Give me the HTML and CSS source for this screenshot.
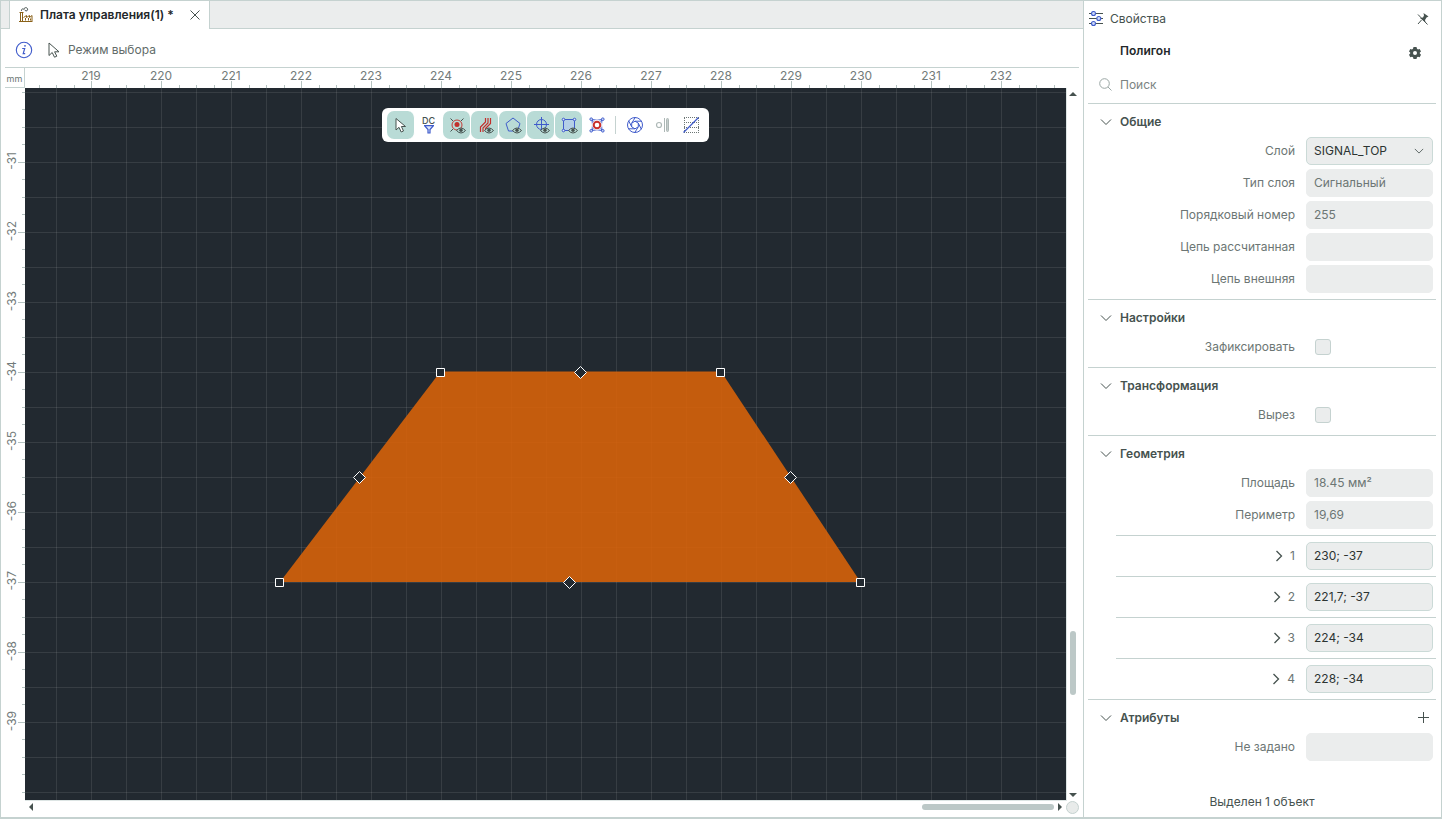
FILE: index.html
```html
<!DOCTYPE html>
<html lang="ru">
<head>
<meta charset="utf-8">
<title>Плата управления(1)</title>
<link rel="stylesheet" href="styles.css">
</head>
<body>
<svg class="defs" aria-hidden="true">
  <symbol id="chev-down" viewBox="0 0 12 12"><path d="M1 3.500 6 8.500 11 3.500" fill="none" stroke="currentColor" stroke-width="1"/></symbol>
  <symbol id="chev-right" viewBox="0 0 12 12"><path d="M3.500 1 8.500 6 3.500 11" fill="none" stroke="currentColor" stroke-width="1.300"/></symbol>
  <symbol id="eye" viewBox="0 0 10 7"><path d="M.5 3.500Q5-1.500 9.500 3.500 5 8.500.5 3.500Z" fill="#b9dbd6" stroke="#46524f"/><circle cx="5" cy="3.300" r="1.700" fill="#46524f"/></symbol>
</svg>
<div class="app">
  <main class="editor">
    <header class="tabs">
      <div class="tab">
        <svg class="tab-icon" width="16" height="16" viewBox="0 0 16 16" fill="none">
          <path d="M2.500 6V14M4.500 6V14M1.500 5.500H5.500M1 14.500H14.500" stroke="#8a6118"/>
          <path d="M5.500 10.500 8.500 8.500V10.500L11.500 8.500V10.500L14 8.500V14" stroke="#8a6118"/>
          <path d="M7.500 11V13.500M10.500 11V13.500M12.500 11.500V13.500" stroke="#8a6118"/>
          <path d="M3.500 4C3 1.500 5.500 1.500 6 2.500 6-.5 10.500.5 9.500 3 9 4.500 7 4 7 3" stroke="#46524f"/>
        </svg>
        <span class="tab-title">Плата управления(1) *</span>
        <button class="icon-btn" aria-label="Закрыть"><svg width="10" height="10" viewBox="0 0 10 10"><path d="M.5.5 9.500 9.500M9.500.5.5 9.500" stroke="#46524f"/></svg></button>
      </div>
    </header>
    <div class="modebar">
      <button class="icon-btn" aria-label="Информация"><svg width="18" height="18" viewBox="0 0 18 18" fill="none" stroke="#3f5bcb"><circle cx="9" cy="9" r="7.700" stroke-width="1.100"/><path d="M7.200 7.500H9.700L8.200 12.700H10.200" stroke-width="1.200"/><circle cx="10" cy="4.900" r=".5"/></svg></button>
      <svg class="mode-icon" width="12" height="16" viewBox="0 0 12 16"><path d="M1 1V13.500L4.200 10.500 6.500 15.200 8.800 14.200 6.600 9.800H11Z" fill="#fff" stroke="#46524f"/></svg>
      <span>Режим выбора</span>
    </div>
    <div class="work">
      <div class="unit">mm</div>
      <ol class="ruler-x"><li>219</li><li>220</li><li>221</li><li>222</li><li>223</li><li>224</li><li>225</li><li>226</li><li>227</li><li>228</li><li>229</li><li>230</li><li>231</li><li>232</li></ol>
      <div class="ruler-end"></div>
      <ol class="ruler-y"><li><span>-31</span></li><li><span>-32</span></li><li><span>-33</span></li><li><span>-34</span></li><li><span>-35</span></li><li><span>-36</span></li><li><span>-37</span></li><li><span>-38</span></li><li><span>-39</span></li></ol>
      <div class="canvas">
        <svg class="drawing" aria-label="Полигон">
          <path class="poly" d="M415.500 283.500H696L835.500 494H255Z"/>
          <path class="handle" d="M411.500 280.500h8v8h-8zM691.500 280.500h8v8h-8zM250.500 490.500h8v8h-8zM831.500 490.500h8v8h-8z"/>
          <path class="handle" d="M555.500 278.500l6 6-6 6-6-6zM334.500 383.500l6 6-6 6-6-6zM765.500 383.500l6 6-6 6-6-6zM544.500 488.500l6 6-6 6-6-6z"/>
        </svg>
        <div class="toolbar" role="toolbar">
          <button class="tool on" aria-label="Выбор"><svg viewBox="0 0 18 18"><path d="M4 2.500V14L7 11.300 9.200 16 11.500 15 9.400 10.500H13.500Z" fill="#fff" stroke="#46524f"/></svg></button>
          <button class="tool dc" aria-label="Фильтр DC"><span>DC</span><svg viewBox="0 0 10 9"><path d="M.6.7H9.400L6 4.500V8H4V4.500Z" fill="#dbe6fb" stroke="#3f5bcb" stroke-width="1.200"/></svg></button>
          <button class="tool on" aria-label="Площадки"><svg viewBox="0 0 18 18"><path d="M2.500 2.500 5 5M15.500 2.500 13 5M2.500 15.500 5 13" stroke="#46524f" fill="none"/><circle cx="9" cy="9" r="5" fill="none" stroke="#c63a35"/><circle cx="9" cy="8.500" r="2.500" fill="#c22f2b"/><use href="#eye" x="8" y="11" width="10" height="7"/></svg></button>
          <button class="tool on" aria-label="Проводники"><svg viewBox="0 0 18 18"><path d="M4.500 16V11L9.500 6V2M7 16V12L12 7V2M9.500 14V12.500L14.500 7.500V2" stroke="#c22f2b" stroke-width="1.200" fill="none"/><use href="#eye" x="8" y="11" width="10" height="7"/></svg></button>
          <button class="tool on" aria-label="Полигоны"><svg viewBox="0 0 18 18"><path d="M9 2 16 7.500 13.500 15H4.500L2 7.500Z" stroke="#3f5bcb" fill="none"/><use href="#eye" x="8" y="11" width="10" height="7"/></svg></button>
          <button class="tool on" aria-label="Отверстия"><svg viewBox="0 0 18 18"><path d="M9.500 1V16M2 8.500H17" stroke="#3f5bcb"/><circle cx="9.500" cy="8.500" r="5" stroke="#3f5bcb" fill="none"/><use href="#eye" x="8" y="11" width="10" height="7"/></svg></button>
          <button class="tool on" aria-label="Контуры"><svg viewBox="0 0 18 18"><path d="M3.500 3.500H14.500V14.500H3.500Z" stroke="#3f5bcb" fill="#b4cfe6"/><g fill="#dbe6fb" stroke="#3f5bcb"><circle cx="3.500" cy="3.500" r="1.300"/><circle cx="14.500" cy="3.500" r="1.300"/><circle cx="3.500" cy="14.500" r="1.300"/></g><use href="#eye" x="8" y="11" width="10" height="7"/></svg></button>
          <button class="tool" aria-label="Привязка"><svg viewBox="0 0 18 18"><path d="M3 3 15 15M15 3 3 15M4 3.500Q9 5 14 3.500Q13 9 14 14.500Q9 13 4 14.500Q5 9 4 3.500Z" fill="none" stroke="#3f5bcb"/><g fill="#dbe6fb" stroke="#3f5bcb"><circle cx="3.200" cy="3.200" r="1.300"/><circle cx="14.800" cy="3.200" r="1.300"/><circle cx="3.200" cy="14.800" r="1.300"/><circle cx="14.800" cy="14.800" r="1.300"/></g><circle cx="9" cy="9" r="5" fill="#fff"/><circle cx="9" cy="9" r="3.300" fill="#fff" stroke="#c9302c" stroke-width="2"/></svg></button>
          <span class="tool-sep"></span>
          <button class="tool" aria-label="Диафрагма"><svg viewBox="0 0 18 18" fill="none" stroke="#3f5bcb"><circle cx="9" cy="9" r="7.500"/><path d="M9 5.200 12.300 7.100V10.900L9 12.800 5.700 10.900V7.100ZM9 5.200 15.500 5.200M12.300 7.100 15.300 13.200M12.300 10.900 8.700 16.600M9 12.800 2.500 12.800M5.700 10.900 2.700 4.800M5.700 7.100 9.300 1.400"/></svg></button>
          <button class="tool" aria-label="Зазор"><svg viewBox="0 0 18 18" fill="#c6cecd" stroke="#adb8b6"><circle cx="5" cy="9" r="2.500" fill="#fff" stroke-width="1.200"/><path d="M10.500 2V16"/><rect x="12.500" y="2.500" width="2" height="13" rx="1"/></svg></button>
          <button class="tool" aria-label="Сетка"><svg viewBox="0 0 18 18" fill="none"><path d="M2 1.500H17M2 6.500H17M2 11.500H17M2 16.500H17M2.500 2V17M16.500 2V17" stroke="#6c7674" stroke-dasharray="1 1"/><path d="M1.500 16.500 16.500 1.500" stroke="#3f5bcb" stroke-width="1.200"/></svg></button>
        </div>
      </div>
      <div class="scroll-y">
        <i class="arrow up"></i>
        <i class="thumb-y"></i>
        <i class="arrow down"></i>
      </div>
      <div class="scroll-x">
        <i class="arrow left"></i>
        <i class="thumb-x"></i>
        <i class="arrow right"></i>
        <i class="corner"></i>
      </div>
    </div>
  </main>

  <aside class="panel">
    <header class="panel-head">
      <svg width="14" height="16" viewBox="0 0 14 16" stroke="#46524f"><path d="M0 2.500H14M0 7.500H14M0 12.500H14"/><g fill="#cdd9f8" stroke="#3f5bcb" stroke-width="1.100"><circle cx="4.500" cy="2.500" r="2"/><circle cx="9.800" cy="7.500" r="2"/><circle cx="4.500" cy="12.500" r="2"/></g></svg>
      <h2>Свойства</h2>
      <button class="icon-btn" aria-label="Открепить"><svg width="12" height="12" viewBox="0 0 12 12"><path d="M6.500 0 11.500 3.500 9.500 4.500 8 7 8.500 9.500 3 5 6 4.500 7 2.500Z" fill="#46524f"/><path d="M4.500 7 1 11M1 1.500 10.500 11.500" stroke="#46524f"/></svg></button>
    </header>
    <div class="panel-title">
      <h1>Полигон</h1>
      <button class="icon-btn" aria-label="Настройки"><svg width="12" height="14" viewBox="0 0 12 14"><path d="M4.500 1H7.500L8 2.800 9 3.400 10.700 2.900 12 5.400 10.800 6.600V7.600L12 8.700 10.700 11.200 9 10.700 8 11.300 7.500 13H4.500L4 11.300 3 10.700 1.300 11.200 0 8.700 1.200 7.600V6.600L0 5.400 1.300 2.900 3 3.400 4 2.800Z" fill="#46524f"/><circle cx="6" cy="7" r="2" fill="#fff"/></svg></button>
    </div>
    <div class="search">
      <svg width="13" height="13" viewBox="0 0 13 13" fill="none" stroke="#9aa6a4"><circle cx="5.500" cy="5.500" r="4.800"/><path d="M9 9 12.500 12.500"/></svg>
      <input type="text" placeholder="Поиск" aria-label="Поиск">
    </div>

    <section class="group">
      <h3><button class="group-head"><svg><use href="#chev-down"/></svg>Общие</button></h3>
      <div class="row"><label for="layer">Слой</label><span class="select-wrap"><select id="layer" class="field live"><option>SIGNAL_TOP</option></select><svg><use href="#chev-down"/></svg></span></div>
      <div class="row"><label for="ltype">Тип слоя</label><input id="ltype" class="field" type="text" value="Сигнальный" readonly></div>
      <div class="row"><label for="order">Порядковый номер</label><input id="order" class="field" type="text" value="255" readonly></div>
      <div class="row"><label for="net1">Цепь рассчитанная</label><input id="net1" class="field" type="text" readonly></div>
      <div class="row"><label for="net2">Цепь внешняя</label><input id="net2" class="field" type="text" readonly></div>
    </section>
    <section class="group">
      <h3><button class="group-head"><svg><use href="#chev-down"/></svg>Настройки</button></h3>
      <div class="row"><label for="lock">Зафиксировать</label><span class="check-cell"><input id="lock" class="check" type="checkbox"></span></div>
    </section>
    <section class="group">
      <h3><button class="group-head"><svg><use href="#chev-down"/></svg>Трансформация</button></h3>
      <div class="row"><label for="cut">Вырез</label><span class="check-cell"><input id="cut" class="check" type="checkbox"></span></div>
    </section>
    <section class="group flush">
      <h3><button class="group-head"><svg><use href="#chev-down"/></svg>Геометрия</button></h3>
      <div class="row"><label for="area">Площадь</label><input id="area" class="field" type="text" value="18.45 мм²" readonly></div>
      <div class="row"><label for="perim">Периметр</label><input id="perim" class="field" type="text" value="19,69" readonly></div>
      <div class="points">
        <div class="row point"><button class="icon-btn" aria-label="Раскрыть 1"><svg><use href="#chev-right"/></svg></button><label for="p1">1</label><input id="p1" class="field live" type="text" value="230; -37"></div>
        <div class="row point"><button class="icon-btn" aria-label="Раскрыть 2"><svg><use href="#chev-right"/></svg></button><label for="p2">2</label><input id="p2" class="field live" type="text" value="221,7; -37"></div>
        <div class="row point"><button class="icon-btn" aria-label="Раскрыть 3"><svg><use href="#chev-right"/></svg></button><label for="p3">3</label><input id="p3" class="field live" type="text" value="224; -34"></div>
        <div class="row point"><button class="icon-btn" aria-label="Раскрыть 4"><svg><use href="#chev-right"/></svg></button><label for="p4">4</label><input id="p4" class="field live" type="text" value="228; -34"></div>
      </div>
    </section>
    <section class="group">
      <div class="head-line">
        <h3><button class="group-head"><svg><use href="#chev-down"/></svg>Атрибуты</button></h3>
        <button class="icon-btn" aria-label="Добавить"><svg width="11" height="11" viewBox="0 0 11 11"><path d="M5.500 0V11M0 5.500H11" stroke="#46524f"/></svg></button>
      </div>
      <div class="row"><label for="attr">Не задано</label><input id="attr" class="field" type="text" readonly></div>
    </section>
    <footer class="status">Выделен 1 объект</footer>
  </aside>
</div>
</body>
</html>
```

FILE: styles.css
```css
:root {
  --line: #c5d2d0;
  --ink: #46524f;
  --label: #6c7674;
  --tick: #b5c3c1;
  --field: #ebeded;
  --accent: #b9dbd6;
  --dark: #222930;
}
* { box-sizing: border-box; }
body {
  margin: 0;
  font: 12px/16px Inter, "Noto Sans", sans-serif;
  color: var(--ink);
  background: #fff;
}
button, input, select { font: inherit; color: inherit; }
button { border: 0; background: none; padding: 0; }
h1, h2, h3, ol { margin: 0; padding: 0; font: inherit; list-style: none; }
svg { display: block; flex: none; }
.defs { position: absolute; width: 0; height: 0; }
.icon-btn { display: flex; align-items: center; justify-content: center; }

.app {
  display: flex;
  min-height: 100vh;
  border: 1px solid var(--line);
  border-bottom-width: 2px;
}
.editor { flex: 1; min-width: 0; display: flex; flex-direction: column; }

.tabs {
  height: 28px;
  display: flex;
  background: linear-gradient(var(--line), var(--line)) bottom / 100% 1px no-repeat var(--field);
  padding-left: 8px;
}
.tab {
  display: flex;
  align-items: center;
  padding: 0 9px 0 8px;
  background: #fff;
  border: solid var(--line);
  border-width: 0 1px;
}
.tab-title { margin: 0 16px 0 6px; font-weight: 600; color: #23282a; }

.modebar { display: flex; align-items: center; height: 38px; padding: 4px 14px 0; color: #626c6a; }
.mode-icon { margin: 0 8px 0 15px; }

.work {
  flex: 1;
  display: grid;
  grid-template-columns: 20px 1fr 12px;
  grid-template-rows: 20px 1fr 16px;
  margin: 0 4px;
  border-top: 1px solid var(--line);
}
.unit {
  border: solid var(--line);
  border-width: 0 1px 1px 0;
  font-size: 9px;
  line-height: 21px;
  text-align: center;
  color: var(--label);
}
.ruler-x {
  display: flex;
  overflow: hidden;
  padding-left: 31px;
  line-height: 15px;
  color: #737b7a;
  background: repeating-linear-gradient(90deg, transparent 0 14px, var(--tick) 14px 15px, transparent 15px 31px, var(--tick) 31px 32px, transparent 32px 49px, var(--tick) 49px 50px, transparent 50px 70px) bottom / 100% 3px no-repeat;
}
.ruler-x li {
  flex: none;
  width: 70px;
  text-align: center;
  background: linear-gradient(var(--tick), var(--tick)) 35px 100% / 1px 7px no-repeat;
}
.ruler-y {
  display: flex;
  flex-direction: column;
  overflow: hidden;
  padding-top: 39px;
  color: #737b7a;
  background: repeating-linear-gradient(transparent 0 4px, var(--tick) 4px 5px, transparent 5px 21px, var(--tick) 21px 22px, transparent 22px 39px, var(--tick) 39px 40px, transparent 40px 56px, var(--tick) 56px 57px, transparent 57px 70px) right / 3px 100% no-repeat;
}
.ruler-y li {
  flex: none;
  height: 70px;
  display: flex;
  align-items: center;
  padding-bottom: 2px;
  background: linear-gradient(var(--tick), var(--tick)) 100% 35px / 7px 1px no-repeat;
}
.ruler-y span { writing-mode: vertical-rl; transform: rotate(180deg); line-height: 14px; }

.canvas {
  position: relative;
  min-width: 0;
  border: solid #dde5e4;
  border-width: 0 1px 1px 0;
  background:
    repeating-linear-gradient(90deg, transparent 0 31px, #ffffff18 31px 32px, transparent 32px 35px),
    repeating-linear-gradient(transparent 0 4px, #ffffff18 4px 5px, transparent 5px 35px),
    var(--dark);
}
.drawing { position: absolute; inset: 0; width: 100%; height: 100%; }
.poly { fill: #d96309; fill-opacity: .89; }
.handle { fill: var(--dark); stroke: #fff; }

.toolbar {
  position: absolute;
  top: 20px;
  left: 0;
  right: 0;
  width: fit-content;
  margin: 0 auto;
  display: flex;
  align-items: center;
  height: 34px;
  padding: 0 4px 0 5px;
  background: #fff;
  border-radius: 6px;
}
.tool {
  width: 28px;
  height: 28px;
  display: flex;
  flex-direction: column;
  align-items: center;
  justify-content: center;
  border: 0 solid #fff;
  border-right-width: 1px;
  border-radius: 7px;
}
.tool svg { width: 18px; height: 18px; }
.tool.on { background: var(--accent); }
.dc span { font-size: 9px; line-height: 9px; font-weight: 500; }
.tool.dc svg { width: 10px; height: 9px; }
.tool-sep { width: 1px; height: 18px; margin: 0 5px 0 4px; background: var(--line); }

.arrow { width: 0; height: 0; border: 4px solid transparent; flex: none; }
.arrow.up { border-top: 0; border-bottom-color: var(--ink); }
.arrow.down { border-bottom: 0; border-top-color: var(--ink); }
.arrow.left { border-left: 0; border-right-color: var(--ink); }
.arrow.right { border-right: 0; border-left-color: var(--ink); }
.scroll-y {
  display: flex;
  flex-direction: column;
  align-items: center;
  justify-content: space-between;
  padding: 4px 0;
}
.thumb-y { width: 6px; height: 64px; margin: auto 0 98px; border-radius: 3px; background: #bcc8c7; }
.scroll-x {
  grid-column: 1 / -1;
  display: flex;
  align-items: center;
  padding: 0 0 4px 24px;
}
.thumb-x { width: 132px; height: 6px; margin: 0 4px 0 auto; border-radius: 3px; background: #bcc8c7; }
.corner { width: 13px; height: 13px; margin-left: 4px; border-radius: 50%; background: #e8ebea; border: 1px solid var(--line); }

.panel {
  width: 358px;
  flex: none;
  display: flex;
  flex-direction: column;
  border-left: 1px solid var(--line);
  padding: 0 5px 0 4px;
}
.panel-head { display: flex; align-items: center; gap: 7px; height: 36px; padding: 0 7px 0 1px; }
.panel-head .icon-btn { margin-left: auto; }
.panel-title { display: flex; align-items: center; justify-content: space-between; height: 28px; padding: 0 15px 0 32px; }
.panel-title h1 { font-weight: 600; color: #23282a; }
.panel-title .icon-btn { padding-top: 4px; }
.search { display: flex; align-items: center; gap: 8px; height: 38px; padding: 1px 0 0 11px; }
.search input { flex: 1; min-width: 0; border: 0; padding: 0; outline: 0; }
.search input::placeholder { color: #7b8482; opacity: 1; }

.group { border-top: 1px solid var(--line); padding: 3px 3px 6px 0; }
.group.flush { padding: 3px 0 0; }
.flush > .row { padding-right: 3px; }
.group-head { display: flex; align-items: center; gap: 8px; height: 30px; padding-left: 12px; font-weight: 600; }
.group-head svg { width: 12px; height: 12px; }
.head-line { display: flex; align-items: center; justify-content: space-between; padding-right: 4px; }
.head-line .icon-btn { padding-bottom: 2px; }
.row { display: flex; align-items: center; justify-content: flex-end; gap: 11px; color: var(--label); }
.row + .row:not(.point) { margin-top: 4px; }
.field {
  width: 127px;
  height: 28px;
  padding: 0 7px 1px;
  border: 1px solid var(--field);
  border-radius: 5px;
  background: var(--field);
  outline: 0;
}
.field.live { border-color: #cbdad7; color: #2c3432; }
.select-wrap { position: relative; }
.select-wrap .field { display: block; appearance: none; padding-bottom: 0; }
.select-wrap svg { position: absolute; right: 9px; top: 9px; width: 10px; height: 10px; color: var(--ink); pointer-events: none; }
.check-cell { width: 127px; height: 28px; display: flex; align-items: center; padding-left: 9px; }
.check { appearance: none; width: 16px; height: 16px; margin: 0; border: 1px solid var(--line); border-radius: 3px; background: var(--field); }
.points { margin: 6px 0 0 28px; }
.point { border-top: 1px solid var(--line); padding: 6px 3px 6px 0; }
.point .icon-btn { margin-right: -6px; color: var(--ink); }
.point svg { width: 12px; height: 12px; }
.status { margin-top: auto; padding-bottom: 7px; text-align: center; }
```
